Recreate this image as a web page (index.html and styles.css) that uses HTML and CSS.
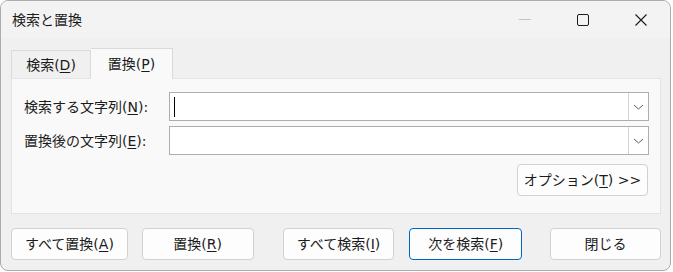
FILE: index.html
```html
<!DOCTYPE html>
<html lang="ja">
<head>
    <meta charset="UTF-8">
    <title>検索と置換</title>
    <link rel="stylesheet" href="styles.css">
</head>
<body>
    <div class="window">
        <!-- Title bar -->
        <div class="titlebar">
            <div class="title">検索と置換</div>
            <div class="caption-buttons">
                <div class="caption-btn">
                    <svg width="14" height="14" viewBox="0 0 14 14"><line x1="1" y1="6.5" x2="13" y2="6.5" stroke="#c4c4c4" stroke-width="1"/></svg>
                </div>
                <div class="caption-btn">
                    <svg width="14" height="14" viewBox="0 0 14 14"><rect x="1.5" y="1.5" width="11" height="11" rx="1.5" fill="none" stroke="#1b1b1b" stroke-width="1"/></svg>
                </div>
                <div class="caption-btn">
                    <svg width="14" height="14" viewBox="0 0 14 14"><path d="M1.5 1.5 L12.5 12.5 M12.5 1.5 L1.5 12.5" stroke="#1b1b1b" stroke-width="1.1" fill="none"/></svg>
                </div>
            </div>
        </div>

        <div class="dialog-body">
            <!-- Tabs -->
            <div class="tabs">
                <div class="tab">検索(<u>D</u>)</div>
                <div class="tab active">置換(<u>P</u>)</div>
            </div>

            <!-- Tab panel -->
            <div class="tab-panel">
                <div class="field-row">
                    <label class="field-label">検索する文字列(<u>N</u>):</label>
                    <div class="combo">
                        <div class="combo-text"><span class="caret"></span></div>
                        <div class="combo-drop">
                            <svg width="11" height="6" viewBox="0 0 11 6"><path d="M1 1 L5.5 5 L10 1" stroke="#5a5a5a" stroke-width="1" fill="none"/></svg>
                        </div>
                    </div>
                </div>
                <div class="field-row">
                    <label class="field-label">置換後の文字列(<u>E</u>):</label>
                    <div class="combo">
                        <div class="combo-text"></div>
                        <div class="combo-drop">
                            <svg width="11" height="6" viewBox="0 0 11 6"><path d="M1 1 L5.5 5 L10 1" stroke="#5a5a5a" stroke-width="1" fill="none"/></svg>
                        </div>
                    </div>
                </div>
                <div class="options-row">
                    <button class="btn btn-options">オプション(<u>T</u>) &gt;&gt;</button>
                </div>
            </div>

            <!-- Dialog buttons -->
            <div class="button-row">
                <button class="btn btn-replace-all">すべて置換(<u>A</u>)</button>
                <button class="btn btn-replace">置換(<u>R</u>)</button>
                <button class="btn btn-find-all">すべて検索(<u>I</u>)</button>
                <button class="btn btn-find-next default">次を検索(<u>F</u>)</button>
                <button class="btn btn-close">閉じる</button>
            </div>
        </div>
    </div>
</body>
</html>
```

FILE: styles.css
```css
body {
    margin: 0;
    background-color: #ffffff;
    font-family: "DejaVu Sans", "Noto Sans CJK JP", sans-serif;
    font-size: 14px;
    color: #1b1b1b;
}

u {
    text-underline-offset: 2px;
}

/* Window frame */
.window {
    width: 669px;
    height: 269px;
    border: 1px solid #acacac;
    border-radius: 8px;
    background-color: #f0f0f0;
    overflow: hidden;
    display: flex;
    flex-direction: column;
}

/* Title bar */
.titlebar {
    height: 37px;
    flex-shrink: 0;
    background-color: #f3f3f3;
    display: flex;
    align-items: center;
    padding-left: 11px;
}

.title {
    line-height: 20px;
}

.caption-buttons {
    margin-left: auto;
    display: flex;
    height: 100%;
}

.caption-btn {
    width: 58px;
    display: flex;
    justify-content: center;
    align-items: center;
}

.caption-btn svg {
    display: block;
}

/* Body */
.dialog-body {
    flex: 1;
    padding: 10px 9px 0 10px;
    display: flex;
    flex-direction: column;
}

.tabs {
    display: flex;
    align-items: flex-end;
    height: 30px;
}

.tab {
    width: 78px;
    height: 27px;
    border: 1px solid #dadada;
    border-bottom: none;
    background-color: #f0f0f0;
    display: flex;
    justify-content: center;
    align-items: center;
    line-height: 20px;
}

.tab.active {
    width: 81px;
    height: 30px;
    margin-bottom: -1px;
    border-left: none;
    background-color: #f9f9f9;
    position: relative;
    z-index: 1;
}

.tab-panel {
    height: 136px;
    box-sizing: border-box;
    border: 1px solid #e3e3e3;
    background-color: #f9f9f9;
    padding: 13px 11px 0 12px;
}

.field-row {
    display: flex;
    align-items: center;
    margin-bottom: 5px;
}

.field-label {
    width: 145px;
    flex-shrink: 0;
    line-height: 20px;
}

.combo {
    flex: 1;
    height: 29px;
    box-sizing: border-box;
    border: 1px solid #adadad;
    background-color: #ffffff;
    display: flex;
}

.combo-text {
    flex: 1;
    display: flex;
    align-items: center;
    padding-left: 4px;
}

.caret {
    width: 1px;
    height: 20px;
    background-color: #000000;
}

.combo-drop {
    width: 19px;
    border-left: 1px solid #d4d4d4;
    display: flex;
    justify-content: center;
    align-items: center;
}

.combo-drop svg {
    display: block;
}

.options-row {
    display: flex;
    justify-content: flex-end;
    margin-top: 9px;
    padding-right: 1px;
}

/* Buttons */
.btn {
    font-family: inherit;
    font-size: 14px;
    color: #1b1b1b;
    height: 32px;
    box-sizing: border-box;
    border: 1px solid #d1d1d1;
    border-radius: 4px;
    background-color: #fdfdfd;
    padding: 0;
    line-height: 20px;
}

.btn.default {
    border-color: #0067c0;
}

.btn-options {
    width: 131px;
}

.button-row {
    display: flex;
    margin-top: 14px;
}

.btn-replace-all {
    width: 117px;
}

.btn-replace {
    width: 112px;
    margin-left: 14px;
}

.btn-find-all {
    width: 112px;
    margin-left: 29px;
}

.btn-find-next {
    width: 113px;
    margin-left: 15px;
}

.btn-close {
    width: 111px;
    margin-left: 28px;
}
```
